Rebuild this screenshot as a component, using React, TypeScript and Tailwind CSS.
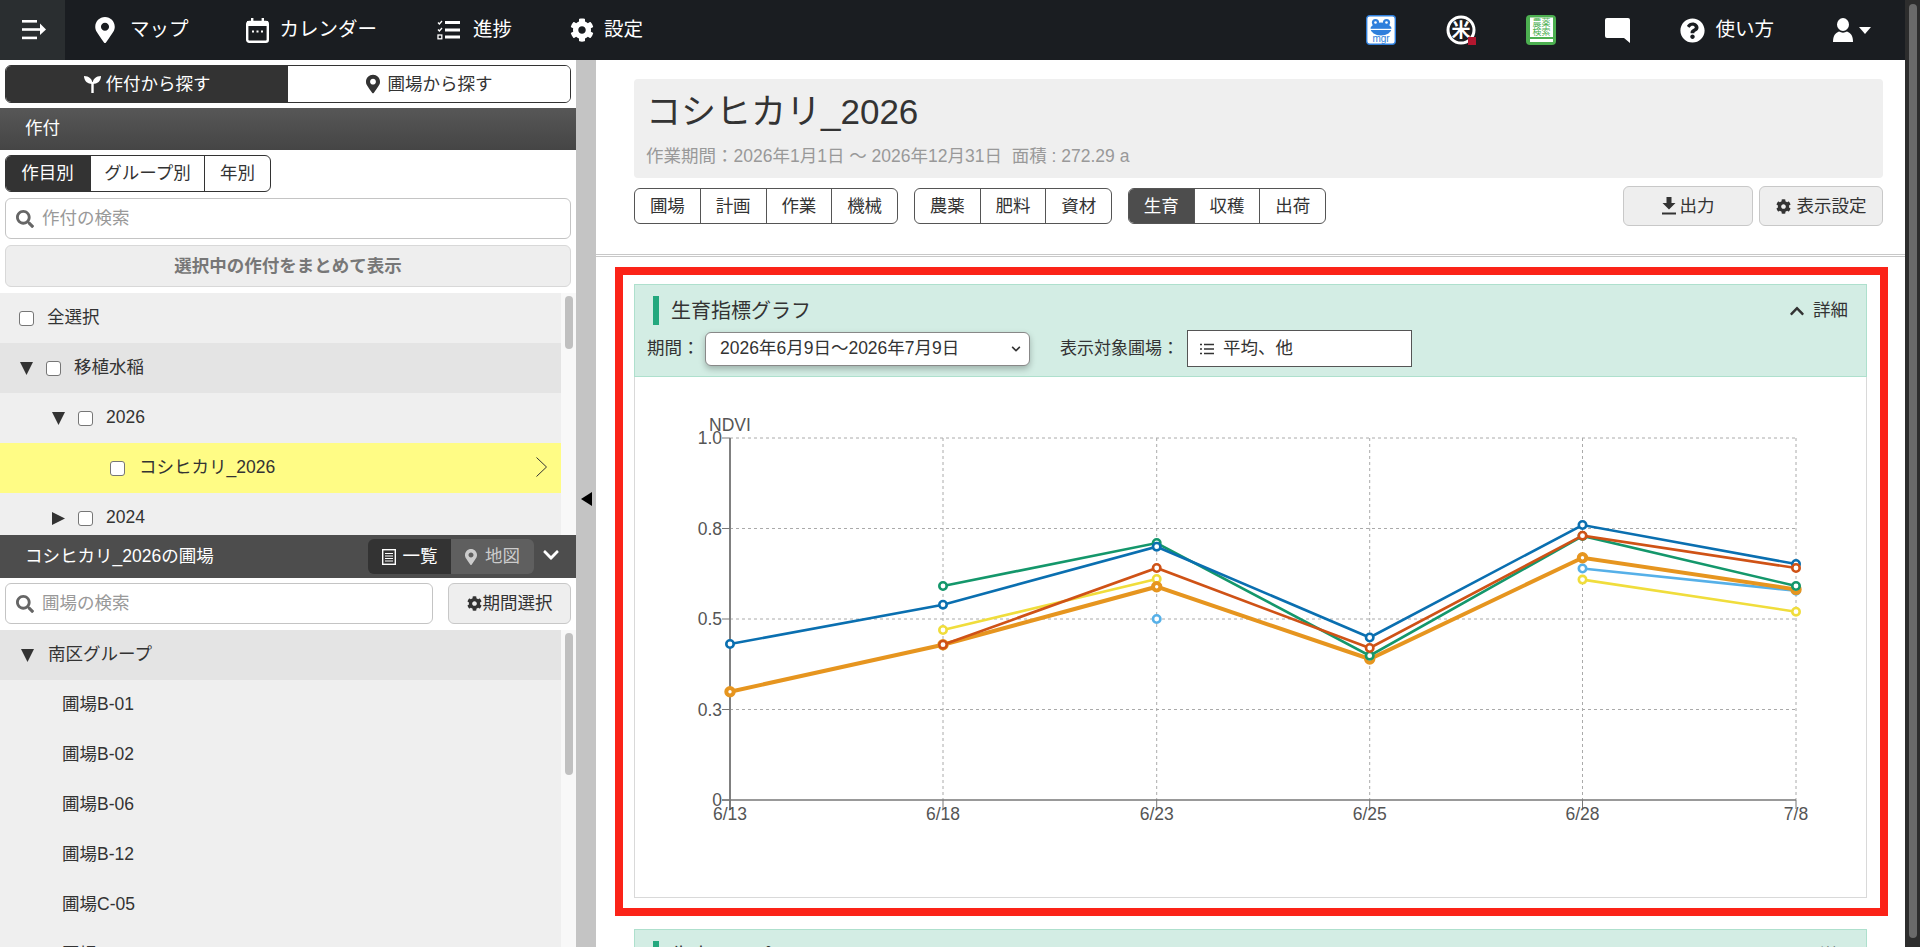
import { ReactNode } from 'react';
import { FaChevronDown, FaChevronUp, FaCog, FaMapMarkerAlt, FaQuestionCircle, FaSearch } from 'react-icons/fa';

const xs = [730, 943, 1156.7, 1369.7, 1582.5, 1796];
const xLabels = ['6/13', '6/18', '6/23', '6/25', '6/28', '7/8'];
const yGrid = [
  { label: '1.0', y: 438 },
  { label: '0.8', y: 528.5 },
  { label: '0.5', y: 619 },
  { label: '0.3', y: 709.5 },
  { label: '0', y: 800 },
];

type Series = { color: string; width: number; values: (number | null)[] };

// draw order matters, later lines sit on top
const series: Series[] = [
  { color: '#f0dd3c', width: 2.6, values: [null, 630, 579, null, 579.6, 611.7] },
  { color: '#56b0e8', width: 2.6, values: [null, null, 619, null, 568.5, 590.8] },
  { color: '#e6951f', width: 4, values: [691.7, 644.7, 586.7, 659, 557.7, 589.4] },
  { color: '#14976b', width: 2.6, values: [null, 586, 543, 655.7, 536, 586] },
  { color: '#0a6fb0', width: 2.6, values: [644, 604.7, 546.7, 637.5, 525, 564] },
  { color: '#cf5216', width: 2.6, values: [null, 644.7, 568, 648, 535.7, 568] },
];

const segmentsOf = (values: (number | null)[]) => {
  const segments: string[][] = [];
  let current: string[] = [];
  values.forEach((value, index) => {
    if (value === null) {
      if (current.length) segments.push(current);
      current = [];
    } else {
      current.push(`${xs[index]},${value}`);
    }
  });
  if (current.length) segments.push(current);
  return segments;
};

const NdviChart = () => (
  <svg width={1231} height={520} viewBox="635 377 1231 520" className="block">
    {yGrid.slice(0, 4).map((g) => (
      <line key={g.label} x1={730} x2={1796} y1={g.y} y2={g.y} stroke="#aaa" strokeDasharray="3 3" />
    ))}
    {xs.slice(1).map((x) => (
      <line key={x} x1={x} x2={x} y1={438} y2={800} stroke="#aaa" strokeDasharray="3 3" />
    ))}
    <line x1={730} x2={730} y1={438} y2={810} stroke="#808080" strokeWidth={2} />
    <line x1={722} x2={1796} y1={800} y2={800} stroke="#777" strokeWidth={1.5} />
    {yGrid.map((g) => (
      <g key={g.label}>
        <line x1={722} x2={730} y1={g.y} y2={g.y} stroke="#777" />
        <text x={722} y={g.y + 6} textAnchor="end" fontSize={17.5} fill="#555">
          {g.label}
        </text>
      </g>
    ))}
    {xs.map((x, i) => (
      <g key={x}>
        <line x1={x} x2={x} y1={800} y2={809} stroke="#777" />
        <text x={x} y={820} textAnchor="middle" fontSize={17.5} fill="#555">
          {xLabels[i]}
        </text>
      </g>
    ))}
    <text x={709} y={431} fontSize={17.5} fill="#555">
      NDVI
    </text>
    {series.map((s) => (
      <g key={s.color}>
        {segmentsOf(s.values).map((points) => (
          <polyline key={points.join()} points={points.join(' ')} fill="none" stroke={s.color} strokeWidth={s.width} />
        ))}
        {s.values.map((value, i) =>
          value === null ? null : (
            <circle key={i} cx={xs[i]} cy={value} r={3.7} fill="#fff" stroke={s.color} strokeWidth={s.width} />
          ),
        )}
      </g>
    ))}
  </svg>
);

const MenuIcon = () => (
  <svg width={26} height={20} viewBox="0 0 26 20" fill="#fff">
    <rect x={1} y={0} width={15} height={2.6} />
    <rect x={1} y={8.2} width={19} height={2.6} />
    <rect x={1} y={16.6} width={15} height={2.6} />
    <path d="M19 3.5 25 9.5 19 15Z" />
  </svg>
);

const CalendarIcon = () => (
  <svg width={23} height={25} viewBox="0 0 23 25" fill="none">
    <rect x={1.2} y={4} width={20.6} height={19.8} rx={2} stroke="#fff" strokeWidth={2.4} />
    <rect x={1} y={3} width={21} height={5} fill="#fff" />
    <rect x={5} y={0} width={2.4} height={5} fill="#fff" />
    <rect x={15.6} y={0} width={2.4} height={5} fill="#fff" />
    <rect x={6} y={12.5} width={2} height={2} fill="#fff" />
    <rect x={10.5} y={12.5} width={2} height={2} fill="#fff" />
    <rect x={15} y={12.5} width={2} height={2} fill="#fff" />
  </svg>
);

const TasksIcon = () => (
  <svg width={24} height={20} viewBox="0 0 24 20" fill="none" stroke="#fff">
    <path d="M1 2.5 2.4 4 5 1M1 9.5 2.4 11 5 8" strokeWidth={1.3} />
    <rect x={1} y={15} width={3.8} height={3.8} strokeWidth={1.3} />
    <path d="M8 2.5h15M8 10h15M8 17h15" strokeWidth={3} />
  </svg>
);

const ChatIcon = () => (
  <svg width={25} height={25} viewBox="0 0 25 25" fill="#fff">
    <path d="M2 0h21a2 2 0 0 1 2 2v23l-6-5H2a2 2 0 0 1-2-2V2a2 2 0 0 1 2-2Z" />
  </svg>
);

const UserIcon = () => (
  <svg width={20} height={24} viewBox="0 0 20 24" fill="#fff">
    <ellipse cx={10} cy={6.5} rx={6} ry={6.5} />
    <path d="M0 24c0-6 2-9 6-10.500 2.500 1.500 5.500 1.500 8 0 4 1.500 6 4.500 6 10.500Z" />
  </svg>
);

const MgrIcon = () => (
  <svg width={30} height={30} viewBox="0 0 30 30">
    <rect x={0.7} y={0.7} width={28.6} height={28.6} rx={3} fill="#fff" stroke="#2f7fdc" strokeWidth={1.4} />
    <circle cx={9.5} cy={7.5} r={3.6} fill="#2f7fdc" />
    <circle cx={20.5} cy={7.5} r={3.6} fill="#2f7fdc" />
    <ellipse cx={15} cy={14} rx={10.5} ry={6.5} fill="#2f7fdc" />
    <circle cx={9.5} cy={7.5} r={1.3} fill="#fff" />
    <circle cx={20.5} cy={7.5} r={1.3} fill="#fff" />
    <rect x={4} y={13.8} width={22} height={1.2} fill="#fff" />
    <text x={15} y={27} textAnchor="middle" fontSize={10} fill="#2f7fdc">
      mgr
    </text>
  </svg>
);

const KomeIcon = () => (
  <svg width={30} height={30} viewBox="0 0 30 30">
    <circle cx={15} cy={15} r={13} fill="none" stroke="#fff" strokeWidth={3} />
    <text x={15} y={22} textAnchor="middle" fontSize={19} fontWeight={700} fill="#fff">
      米
    </text>
    <rect x={22} y={22} width={8} height={8} fill="#b3172f" />
  </svg>
);

const BookIcon = () => (
  <svg width={30} height={30} viewBox="0 0 30 30">
    <rect width={30} height={30} rx={4} fill="#4caf50" />
    <rect x={4} y={2.5} width={23} height={19.5} fill="#fff" />
    <rect x={4} y={24} width={23} height={3} fill="#fff" />
    <text x={15.5} y={11} textAnchor="middle" fontSize={9} fill="#4caf50">
      農薬
    </text>
    <text x={15.5} y={20} textAnchor="middle" fontSize={9} fill="#4caf50">
      検索
    </text>
  </svg>
);

const SproutIcon = () => (
  <svg width={17} height={18} viewBox="0 0 17 18" fill="#fff">
    <path d="M0 1c5 0 8.500 3 8.500 8C3.500 9 0 6 0 1Z" />
    <path d="M17 1c-5 0-8.500 3-8.500 8 5 0 8.500-3 8.500-8Z" />
    <rect x={7.3} y={7} width={2.4} height={11} />
  </svg>
);

const DownloadIcon = () => (
  <svg width={14} height={19} viewBox="0 0 14 19" fill="#333">
    <path d="M4.5 0h5v6h4L7 12.5.5 6h4Z" />
    <rect y={15.5} width={14} height={2} />
  </svg>
);

const SheetIcon = () => (
  <svg width={14} height={16} viewBox="0 0 14 16" fill="none" stroke="#fff">
    <rect x={0.7} y={0.7} width={12.6} height={14.6} strokeWidth={1.4} />
    <path d="M3 4.5h8M3 7h8M3 9.500h8M3 12h8" strokeWidth={1.2} />
  </svg>
);

const ListIcon = () => (
  <svg width={14} height={12} viewBox="0 0 14 12" fill="none" stroke="#333" strokeWidth={1.3}>
    <path d="M0 1.5h2M4 1.5h10M0 6h2M4 6h10M0 10.500h2M4 10.500h10" />
  </svg>
);

const TriangleDown = () => (
  <svg width={13} height={13} viewBox="0 0 13 13" fill="#333" className="translate-y-[1px]">
    <path d="M0 0h13L6.500 13Z" />
  </svg>
);

const TriangleRight = () => (
  <svg width={13} height={13} viewBox="0 0 13 13" fill="#333" className="translate-y-[1px]">
    <path d="M0 0l13 6.500L0 13Z" />
  </svg>
);

const Check = () => (
  <input
    type="checkbox"
    className="h-[15px] w-[15px] shrink-0 translate-y-[1px] appearance-none rounded-[3px] border border-[#767676] bg-white"
  />
);

const SearchBox = ({ placeholder, className }: { placeholder: string; className: string }) => (
  <div className={`flex h-[41px] items-center gap-[8px] rounded-[6px] border border-[#c4c4c4] bg-white pl-[10px] ${className}`}>
    <FaSearch className="shrink-0 text-[18px] text-[#666]" />
    <input placeholder={placeholder} className="w-full bg-transparent text-[17.5px] outline-none placeholder:text-[#999]" />
  </div>
);

const ButtonGroup = ({ items, active, width }: { items: string[]; active?: string; width: string }) => (
  <div className={`flex h-[36px] overflow-hidden rounded-[6px] border border-[#555] bg-white text-[17.5px] text-[#333] ${width}`}>
    {items.map((item) => (
      <span
        key={item}
        className={`flex flex-1 items-center justify-center border-r border-[#555] last:border-r-0 ${
          item === active ? 'bg-[#4d4d4d] text-white' : ''
        }`}
      >
        {item}
      </span>
    ))}
  </div>
);

const PanelHeader = ({ title, children }: { title: string; children?: ReactNode }) => (
  <div className="border border-[#aee0cd] bg-[#d3ede4] pt-[11px] pb-[9px]">
    <div className="flex h-[29px] items-center pr-[18px] pl-[18px]">
      <span className="h-full w-[6px] bg-[#24a87e]" />
      <h2 className="ml-[12px] text-[20px] text-[#333]">{title}</h2>
      <div className="ml-auto flex items-center gap-[8px] text-[17.5px] text-[#333]">
        <FaChevronUp className="text-[16px]" />
        詳細
      </div>
    </div>
    {children}
  </div>
);

const TreeRow = ({ className, children }: { className: string; children: ReactNode }) => (
  <div className={`flex h-[50px] shrink-0 items-center pb-[2px] text-[17.5px] text-[#333] ${className}`}>{children}</div>
);

const App = () => {
  return (
    <div className="flex h-[947px] w-full overflow-hidden bg-white text-[#333] [font-family:'Liberation_Sans','Noto_Sans_CJK_JP',sans-serif]">
      <div className="flex w-[1905px] shrink-0 flex-col">
        <header className="flex h-[60px] shrink-0 items-center bg-[#1a1d21] text-[19.5px] text-white">
          <div className="flex h-full w-[65px] items-center justify-center bg-[#2a2e30] pl-[2px]">
            <MenuIcon />
          </div>
          <nav className="flex items-center">
            <a className="ml-[30px] flex items-center gap-[15px]">
              <FaMapMarkerAlt className="h-[26px] w-[20px]" />
              マップ
            </a>
            <a className="ml-[57px] flex items-center gap-[11px]">
              <CalendarIcon />
              カレンダー
            </a>
            <a className="ml-[60px] flex items-center gap-[12px]">
              <TasksIcon />
              進捗
            </a>
            <a className="ml-[58px] flex items-center gap-[10px]">
              <FaCog className="h-[24px] w-[24px]" />
              設定
            </a>
          </nav>
          <div className="ml-auto flex items-center gap-[50px] pr-[34px]">
            <MgrIcon />
            <KomeIcon />
            <BookIcon />
            <div className="-ml-[1px]">
              <ChatIcon />
            </div>
            <a className="flex items-center gap-[10px]">
              <FaQuestionCircle className="h-[25px] w-[25px]" />
              使い方
            </a>
            <div className="ml-[9px] flex items-center gap-[6px]">
              <UserIcon />
              <span className="h-0 w-0 border-x-[6px] border-t-[7px] border-x-transparent border-t-white" />
            </div>
          </div>
        </header>

        <div className="flex min-h-0 flex-1">
          <aside className="flex w-[576px] shrink-0 flex-col">
            <div className="flex h-[48px] shrink-0 items-start px-[5px] pt-[5px]">
              <div className="flex h-[38px] w-full overflow-hidden rounded-[6px] border border-[#333] text-[17.5px]">
                <button className="flex w-1/2 items-center justify-center gap-[5px] bg-[#333] text-white">
                  <SproutIcon />
                  作付から探す
                </button>
                <button className="flex w-1/2 items-center justify-center gap-[8px] bg-white text-[#333]">
                  <FaMapMarkerAlt className="h-[20px] w-[14px]" />
                  圃場から探す
                </button>
              </div>
            </div>

            <div className="flex h-[42px] shrink-0 items-center bg-gradient-to-b from-[#575757] to-[#454545] pb-[2px] pl-[25px] text-[17.5px] text-white">
              作付
            </div>

            <div className="mt-[5px] flex h-[37px] w-[266px] shrink-0 translate-x-[5px] overflow-hidden rounded-[6px] border border-[#333] text-[17.5px]">
              <span className="flex w-[85px] items-center justify-center bg-[#333] pr-[2px] text-white">作目別</span>
              <span className="flex w-[114px] items-center justify-center border-r border-[#333]">グループ別</span>
              <span className="flex flex-1 items-center justify-center">年別</span>
            </div>

            <SearchBox placeholder="作付の検索" className="mx-[5px] mt-[6px] shrink-0" />

            <button className="mx-[5px] mt-[6px] h-[42px] shrink-0 rounded-[6px] border border-[#d8d8d8] bg-[#eee] text-[17.5px] font-bold text-[#777]">
              選択中の作付をまとめて表示
            </button>

            <div className="mt-[6px] flex h-[242px] shrink-0 overflow-hidden">
              <div className="flex-1 bg-[#efefef]">
                <TreeRow className="gap-[13px] pl-[19px]">
                  <Check />
                  全選択
                </TreeRow>
                <TreeRow className="bg-[#e4e4e4] pl-[20px]">
                  <TriangleDown />
                  <span className="ml-[13px] flex">
                    <Check />
                  </span>
                  <span className="ml-[13px]">移植水稲</span>
                </TreeRow>
                <TreeRow className="pl-[52px]">
                  <TriangleDown />
                  <span className="ml-[13px] flex">
                    <Check />
                  </span>
                  <span className="ml-[13px]">2026</span>
                </TreeRow>
                <TreeRow className="bg-[#fffc85] pl-[110px]">
                  <Check />
                  <span className="ml-[14px]">コシヒカリ_2026</span>
                  <svg width={11} height={20} viewBox="0 0 11 20" fill="none" stroke="#333" className="mr-[14px] ml-auto">
                    <path d="M.5.5 10.500 10 .5 19.500" />
                  </svg>
                </TreeRow>
                <TreeRow className="pl-[52px]">
                  <TriangleRight />
                  <span className="ml-[13px] flex">
                    <Check />
                  </span>
                  <span className="ml-[13px]">2024</span>
                </TreeRow>
              </div>
              <div className="w-[15px] bg-[#f8f8f8] pt-[3px] pl-[4px]">
                <div className="h-[53px] w-[8px] rounded-full bg-[#c0c0c0]" />
              </div>
            </div>

            <div className="flex h-[43px] shrink-0 items-center bg-[#4d4d4d] pl-[25px] text-[17.5px] text-white">
              コシヒカリ_2026の圃場
              <div className="ml-auto flex h-[35px] w-[166px] overflow-hidden rounded-[6px]">
                <span className="flex w-[83px] items-center justify-center gap-[7px] bg-[#333]">
                  <SheetIcon />
                  一覧
                </span>
                <span className="flex flex-1 items-center justify-center gap-[8px] bg-[#5f5f5f] text-[#ccc]">
                  <FaMapMarkerAlt className="h-[16px] w-[12px]" />
                  地図
                </span>
              </div>
              <FaChevronDown className="mr-[16px] ml-[8px] -translate-y-[2px] text-[18px]" />
            </div>

            <div className="mt-[5px] flex shrink-0 gap-[15px] px-[5px]">
              <SearchBox placeholder="圃場の検索" className="w-[428px]" />
              <button className="flex h-[41px] flex-1 items-center justify-center gap-[1px] rounded-[6px] border border-[#c8c8c8] bg-[#eee] text-[17.5px]">
                <FaCog className="text-[15px]" />
                期間選択
              </button>
            </div>

            <div className="mt-[6px] flex min-h-0 flex-1 overflow-hidden">
              <div className="flex-1 bg-[#efefef]">
                <TreeRow className="bg-[#e4e4e4] pl-[21px]">
                  <TriangleDown />
                  <span className="ml-[14px]">南区グループ</span>
                </TreeRow>
                {['圃場B-01', '圃場B-02', '圃場B-06', '圃場B-12', '圃場C-05', '圃場C-11'].map((name) => (
                  <TreeRow key={name} className="pl-[62px]">
                    {name}
                  </TreeRow>
                ))}
              </div>
              <div className="w-[15px] bg-[#f8f8f8] pt-[3px] pl-[4px]">
                <div className="h-[142px] w-[8px] rounded-full bg-[#c0c0c0]" />
              </div>
            </div>
          </aside>

          <div className="flex w-[20px] shrink-0 items-center justify-center bg-[#c4c4c4] pb-[10px]">
            <svg width={11} height={14} viewBox="0 0 11 14" fill="#000">
              <path d="M11 0v14L0 7Z" />
            </svg>
          </div>

          <main className="min-w-0 flex-1 overflow-hidden">
            <div className="h-[197px] border-b-[3px] border-double border-[#c8c8c8] px-[22px] pt-[19px] pl-[38px]">
              <div className="h-[99px] rounded-[4px] bg-[#efefef] pt-[12px] pl-[12px]">
                <h1 className="text-[35px] leading-[42px] text-[#333]">コシヒカリ_2026</h1>
                <p className="mt-[11px] text-[17.5px] leading-[24px] text-[#999]">
                  作業期間：2026年1月1日 〜 2026年12月31日&nbsp;&nbsp;面積 : 272.29 a
                </p>
              </div>
              <div className="mt-[8px] flex h-[40px] items-center gap-[16px]">
                <ButtonGroup items={['圃場', '計画', '作業', '機械']} width="w-[264px]" />
                <ButtonGroup items={['農薬', '肥料', '資材']} width="w-[198px]" />
                <ButtonGroup items={['生育', '収穫', '出荷']} active="生育" width="w-[198px]" />
                <div className="ml-auto flex gap-[6px] text-[17.5px]">
                  <button className="flex h-[40px] w-[130px] items-center justify-center gap-[4px] rounded-[6px] border border-[#c8c8c8] bg-[#eee]">
                    <DownloadIcon />
                    出力
                  </button>
                  <button className="flex h-[40px] w-[124px] items-center justify-center gap-[6px] rounded-[6px] border border-[#c8c8c8] bg-[#eee]">
                    <FaCog className="text-[15px]" />
                    表示設定
                  </button>
                </div>
              </div>
            </div>

            <div className="px-[38px] pt-[27px]">
              <section className="relative h-[614px] border-b border-[#d9d9d9]">
                <PanelHeader title="生育指標グラフ">
                  <div className="mt-[5px] flex h-[37px] items-center pl-[12px] text-[17.5px] text-[#333]">
                    <span className="w-[58px]">期間：</span>
                    <div className="flex h-[34px] w-[325px] items-center justify-between rounded-[6px] border border-[#888] bg-white pr-[8px] pl-[14px] shadow-[0_3px_6px_rgba(0,0,0,0.25)]">
                      2026年6月9日～2026年7月9日
                      <FaChevronDown className="text-[10px]" />
                    </div>
                    <span className="ml-[30px] w-[127px] text-[17px]">表示対象圃場：</span>
                    <div className="flex h-[37px] w-[225px] items-center gap-[9px] border border-[#555] bg-white pl-[12px]">
                      <ListIcon />
                      平均、他
                    </div>
                  </div>
                </PanelHeader>
                <div className="h-[520px] border-x border-[#d9d9d9] bg-white">
                  <NdviChart />
                </div>
                <div className="pointer-events-none absolute -top-[17px] -right-[21px] -bottom-[19px] -left-[19px] border-[8px] border-[#fb2318]" />
              </section>

              <section className="mt-[31px]">
                <PanelHeader title="生育マップ" />
              </section>
            </div>
          </main>
        </div>
      </div>

      <div className="flex-1 bg-[#2d2d2d] pt-[4px] pl-[4px]">
        <div className="h-[934px] w-[8px] rounded-full bg-[#6a6a6a]" />
      </div>
    </div>
  );
};

export default App;
